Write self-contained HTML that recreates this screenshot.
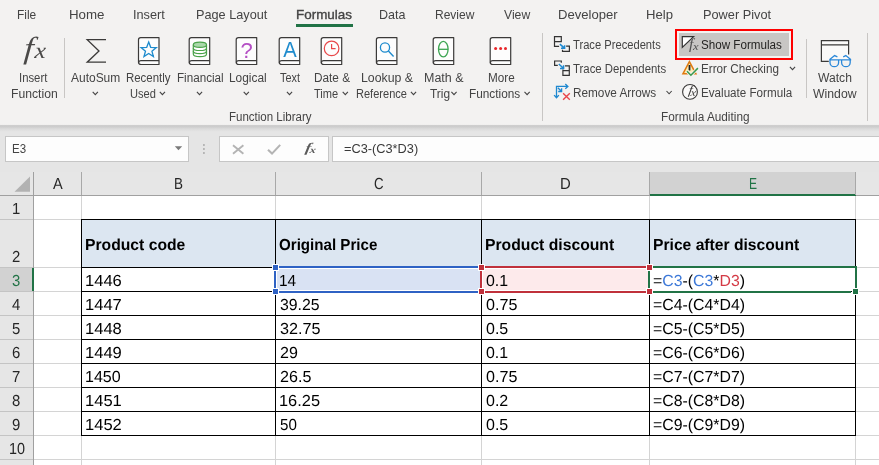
<!DOCTYPE html>
<html><head><meta charset="utf-8"><title>Excel</title>
<style>
html,body{margin:0;padding:0;}
body{width:879px;height:465px;overflow:hidden;position:relative;background:#fff;font-family:"Liberation Sans",sans-serif;}
.t{position:absolute;white-space:nowrap;line-height:0;transform-origin:0 0;display:inline-block;}
.abs{position:absolute;}
#ribbon{position:absolute;left:0;top:0;width:879px;height:124px;background:#f3f2f1;}
#rshadow{position:absolute;left:0;top:124px;width:879px;height:8px;background:linear-gradient(#f3f2f1 0,#f0efee 0.6px,#cacaca 1.6px,#cdcdcd 2.8px,#dadada 4.8px,#e5e5e5 7.8px);}
#fbar{position:absolute;left:0;top:132px;width:879px;height:40px;background:#e5e5e5;}
.box{position:absolute;background:#fdfdfd;border:1px solid #c6c6c6;box-sizing:border-box;}
.vsep{position:absolute;width:1px;background:#c8c6c4;}
#sheet{position:absolute;left:0;top:172px;width:879px;height:293px;background:#fff;}
.hl{position:absolute;height:1px;background:#d4d4d4;}
.vl{position:absolute;width:1px;background:#d4d4d4;}
.bl{position:absolute;background:#000;}
#rt{position:absolute;left:0;top:0;width:879px;height:172px;will-change:transform;}
#st{position:absolute;left:0;top:0;width:879px;height:465px;}

</style></head>
<body>
<div id="ribbon"></div><div id="rshadow"></div><div id="fbar"></div>
<div class="abs" style="left:296px;top:24px;width:57px;height:3px;background:#217346"></div>
<div class="vsep" style="left:64px;top:38px;height:60px"></div>
<div class="vsep" style="left:542px;top:33px;height:88px"></div>
<div class="vsep" style="left:806px;top:39px;height:59px"></div>
<div class="vsep" style="left:867px;top:33px;height:88px"></div>
<div class="abs" style="left:679px;top:33px;width:110px;height:23px;background:#c8c6c4"></div>
<div class="abs" style="left:675px;top:29px;width:118px;height:31px;box-sizing:border-box;border:2px solid #fe0000"></div>
<div class="box" style="left:5px;top:136px;width:184px;height:26px"></div>
<div class="box" style="left:219px;top:136px;width:110px;height:26px"></div>
<div class="box" style="left:332px;top:136px;width:560px;height:26px"></div>
<div id="sheet"></div>
<div class="abs" style="left:0;top:172px;width:879px;height:23px;background:#e6e6e6"></div>
<div class="abs" style="left:0;top:195px;width:33px;height:270px;background:#e6e6e6"></div>
<div class="abs" style="left:650px;top:172px;width:206px;height:22px;background:#d2d2d2"></div>
<div class="abs" style="left:650px;top:194px;width:206px;height:2px;background:#217346"></div>
<div class="abs" style="left:0;top:268px;width:33px;height:23px;background:#d2d2d2"></div>
<div class="abs" style="left:32px;top:267px;width:2px;height:25px;background:#217346"></div>
<div class="vl" style="left:81px;top:196px;height:269px"></div>
<div class="vl" style="left:275px;top:196px;height:269px"></div>
<div class="vl" style="left:481px;top:196px;height:269px"></div>
<div class="vl" style="left:649px;top:196px;height:269px"></div>
<div class="vl" style="left:855px;top:196px;height:269px"></div>
<div class="hl" style="left:34px;top:219px;width:845px"></div>
<div class="hl" style="left:34px;top:267px;width:845px"></div>
<div class="hl" style="left:34px;top:291px;width:845px"></div>
<div class="hl" style="left:34px;top:315px;width:845px"></div>
<div class="hl" style="left:34px;top:339px;width:845px"></div>
<div class="hl" style="left:34px;top:363px;width:845px"></div>
<div class="hl" style="left:34px;top:387px;width:845px"></div>
<div class="hl" style="left:34px;top:411px;width:845px"></div>
<div class="hl" style="left:34px;top:435px;width:845px"></div>
<div class="hl" style="left:34px;top:459px;width:845px"></div>
<div class="abs" style="left:0;top:195px;width:650px;height:1px;background:#a0a0a0"></div>
<div class="abs" style="left:856px;top:195px;width:23px;height:1px;background:#a0a0a0"></div>
<div class="abs" style="left:33px;top:172px;width:1px;height:96px;background:#a0a0a0"></div>
<div class="abs" style="left:33px;top:291px;width:1px;height:174px;background:#a0a0a0"></div>
<div class="abs" style="left:81px;top:172px;width:1px;height:23px;background:#a8a8a8"></div>
<div class="abs" style="left:275px;top:172px;width:1px;height:23px;background:#a8a8a8"></div>
<div class="abs" style="left:481px;top:172px;width:1px;height:23px;background:#a8a8a8"></div>
<div class="abs" style="left:649px;top:172px;width:1px;height:23px;background:#a8a8a8"></div>
<div class="abs" style="left:855px;top:172px;width:1px;height:23px;background:#a8a8a8"></div>
<div class="abs" style="left:0;top:219px;width:33px;height:1px;background:#c4c4c4"></div>
<div class="abs" style="left:0;top:267px;width:33px;height:1px;background:#c4c4c4"></div>
<div class="abs" style="left:0;top:291px;width:33px;height:1px;background:#c4c4c4"></div>
<div class="abs" style="left:0;top:315px;width:33px;height:1px;background:#c4c4c4"></div>
<div class="abs" style="left:0;top:339px;width:33px;height:1px;background:#c4c4c4"></div>
<div class="abs" style="left:0;top:363px;width:33px;height:1px;background:#c4c4c4"></div>
<div class="abs" style="left:0;top:387px;width:33px;height:1px;background:#c4c4c4"></div>
<div class="abs" style="left:0;top:411px;width:33px;height:1px;background:#c4c4c4"></div>
<div class="abs" style="left:0;top:435px;width:33px;height:1px;background:#c4c4c4"></div>
<div class="abs" style="left:0;top:459px;width:33px;height:1px;background:#c4c4c4"></div>
<div class="abs" style="left:82px;top:220px;width:773px;height:47px;background:#dce6f1"></div>
<div class="bl" style="left:81px;top:219px;width:1px;height:217px"></div>
<div class="bl" style="left:275px;top:219px;width:1px;height:217px"></div>
<div class="bl" style="left:481px;top:219px;width:1px;height:217px"></div>
<div class="bl" style="left:649px;top:219px;width:1px;height:217px"></div>
<div class="bl" style="left:855px;top:219px;width:1px;height:217px"></div>
<div class="bl" style="left:81px;top:219px;width:775px;height:1px"></div>
<div class="bl" style="left:81px;top:267px;width:775px;height:1px"></div>
<div class="bl" style="left:81px;top:291px;width:775px;height:1px"></div>
<div class="bl" style="left:81px;top:315px;width:775px;height:1px"></div>
<div class="bl" style="left:81px;top:339px;width:775px;height:1px"></div>
<div class="bl" style="left:81px;top:363px;width:775px;height:1px"></div>
<div class="bl" style="left:81px;top:387px;width:775px;height:1px"></div>
<div class="bl" style="left:81px;top:411px;width:775px;height:1px"></div>
<div class="bl" style="left:81px;top:435px;width:775px;height:1px"></div>
<svg class="abs" style="left:0;top:0;will-change:transform" width="879" height="465" viewBox="0 0 879 465" fill="none">
<text transform="translate(23.5,58.2) scale(1.12,1) skewX(-4)" font-family="Liberation Serif, serif" font-style="italic" fill="#4a4948"><tspan font-size="30.4">f</tspan><tspan x="9.6" y="0" font-size="22.6">x</tspan></text>
<path d="M106,39.7 H87.2 L99,51 L87.2,62.2 H106" stroke="#3b3a39" stroke-width="1.3" stroke-linejoin="miter"/>
<path d="M138.5,39.800000000000004 Q138.5,37.6 140.7,37.6 H159.0 V64.5 H141.1 Q138.5,64.5 138.5,62.3 Z" fill="#fdfdfd" stroke="#3b3a39" stroke-width="1.2" stroke-linejoin="round"/>
<path d="M159.0,60.7 H141.1 Q138.7,60.7 138.7,62.7" stroke="#3b3a39" stroke-width="1.2"/>
<path d="M189.2,39.800000000000004 Q189.2,37.6 191.39999999999998,37.6 H209.7 V64.5 H191.79999999999998 Q189.2,64.5 189.2,62.3 Z" fill="#fdfdfd" stroke="#3b3a39" stroke-width="1.2" stroke-linejoin="round"/>
<path d="M209.7,60.7 H191.79999999999998 Q189.39999999999998,60.7 189.39999999999998,62.7" stroke="#3b3a39" stroke-width="1.2"/>
<path d="M236.2,39.800000000000004 Q236.2,37.6 238.39999999999998,37.6 H256.7 V64.5 H238.79999999999998 Q236.2,64.5 236.2,62.3 Z" fill="#fdfdfd" stroke="#3b3a39" stroke-width="1.2" stroke-linejoin="round"/>
<path d="M256.7,60.7 H238.79999999999998 Q236.39999999999998,60.7 236.39999999999998,62.7" stroke="#3b3a39" stroke-width="1.2"/>
<path d="M279.2,39.800000000000004 Q279.2,37.6 281.4,37.6 H299.7 V64.5 H281.8 Q279.2,64.5 279.2,62.3 Z" fill="#fdfdfd" stroke="#3b3a39" stroke-width="1.2" stroke-linejoin="round"/>
<path d="M299.7,60.7 H281.8 Q279.4,60.7 279.4,62.7" stroke="#3b3a39" stroke-width="1.2"/>
<path d="M321.2,39.800000000000004 Q321.2,37.6 323.4,37.6 H341.7 V64.5 H323.8 Q321.2,64.5 321.2,62.3 Z" fill="#fdfdfd" stroke="#3b3a39" stroke-width="1.2" stroke-linejoin="round"/>
<path d="M341.7,60.7 H323.8 Q321.4,60.7 321.4,62.7" stroke="#3b3a39" stroke-width="1.2"/>
<path d="M376.4,39.800000000000004 Q376.4,37.6 378.59999999999997,37.6 H396.9 V64.5 H379.0 Q376.4,64.5 376.4,62.3 Z" fill="#fdfdfd" stroke="#3b3a39" stroke-width="1.2" stroke-linejoin="round"/>
<path d="M396.9,60.7 H379.0 Q376.59999999999997,60.7 376.59999999999997,62.7" stroke="#3b3a39" stroke-width="1.2"/>
<path d="M433.2,39.800000000000004 Q433.2,37.6 435.4,37.6 H453.7 V64.5 H435.8 Q433.2,64.5 433.2,62.3 Z" fill="#fdfdfd" stroke="#3b3a39" stroke-width="1.2" stroke-linejoin="round"/>
<path d="M453.7,60.7 H435.8 Q433.4,60.7 433.4,62.7" stroke="#3b3a39" stroke-width="1.2"/>
<path d="M490.2,39.800000000000004 Q490.2,37.6 492.4,37.6 H510.7 V64.5 H492.8 Q490.2,64.5 490.2,62.3 Z" fill="#fdfdfd" stroke="#3b3a39" stroke-width="1.2" stroke-linejoin="round"/>
<path d="M510.7,60.7 H492.8 Q490.4,60.7 490.4,62.7" stroke="#3b3a39" stroke-width="1.2"/>
<polygon points="148.70,42.10 150.70,47.35 156.31,47.63 151.93,51.15 153.40,56.57 148.70,53.50 144.00,56.57 145.47,51.15 141.09,47.63 146.70,47.35" stroke="#1e8bcd" stroke-width="1.3" stroke-linejoin="miter"/>
<path d="M193.3,44.8 V54 A6.6,2.6 0 0 0 206.5,54 V44.8" fill="#fff" stroke="#4aa24a" stroke-width="1.2"/>
<ellipse cx="199.9" cy="44.8" rx="6.6" ry="2.6" fill="#a9d8a9" stroke="#4aa24a" stroke-width="1.2"/>
<path d="M193.3,47.9 A6.6,2.6 0 0 0 206.5,47.9" stroke="#4aa24a" stroke-width="1.2"/>
<path d="M193.3,51 A6.6,2.6 0 0 0 206.5,51" stroke="#4aa24a" stroke-width="1.2"/>
<text x="246.6" y="57.8" text-anchor="middle" font-family="Liberation Sans, sans-serif" font-size="22" fill="#b44fc4">?</text>
<text x="289.9" y="56.8" text-anchor="middle" font-family="Liberation Sans, sans-serif" font-size="22" fill="#1e8bcd" textLength="13.5" lengthAdjust="spacingAndGlyphs">A</text>
<circle cx="331.6" cy="48.4" r="7.3" stroke="#e8484a" stroke-width="1.2"/>
<path d="M331.6,44 V48.6 H335.6" stroke="#e8484a" stroke-width="1.2"/>
<circle cx="385" cy="47.5" r="4.6" stroke="#1e8bcd" stroke-width="1.3"/>
<path d="M388.4,51 L393.6,56.6" stroke="#1e8bcd" stroke-width="1.4"/>
<ellipse cx="443.3" cy="49.1" rx="4.8" ry="7.8" stroke="#3da552" stroke-width="1.3"/>
<path d="M438.5,49.3 H448.1" stroke="#3da552" stroke-width="1.3"/>
<circle cx="495.6" cy="48.6" r="1.5" fill="#e8262a"/>
<circle cx="500.6" cy="48.6" r="1.5" fill="#e8262a"/>
<circle cx="505.5" cy="48.6" r="1.5" fill="#e8262a"/>
<path d="M92.7,91.89999999999999 L95.3,94.7 L97.89999999999999,91.89999999999999" stroke="#444" stroke-width="1.1"/>
<path d="M196.9,91.89999999999999 L199.5,94.7 L202.1,91.89999999999999" stroke="#444" stroke-width="1.1"/>
<path d="M243.70000000000002,91.89999999999999 L246.3,94.7 L248.9,91.89999999999999" stroke="#444" stroke-width="1.1"/>
<path d="M286.9,91.89999999999999 L289.5,94.7 L292.1,91.89999999999999" stroke="#444" stroke-width="1.1"/>
<path d="M159.8,91.89999999999999 L162.4,94.7 L165.0,91.89999999999999" stroke="#444" stroke-width="1.1"/>
<path d="M342.7,91.89999999999999 L345.3,94.7 L347.90000000000003,91.89999999999999" stroke="#444" stroke-width="1.1"/>
<path d="M410.9,91.89999999999999 L413.5,94.7 L416.1,91.89999999999999" stroke="#444" stroke-width="1.1"/>
<path d="M451.4,91.89999999999999 L454,94.7 L456.6,91.89999999999999" stroke="#444" stroke-width="1.1"/>
<path d="M524.5,91.89999999999999 L527.1,94.7 L529.7,91.89999999999999" stroke="#444" stroke-width="1.1"/>
<path d="M666.5,91.0 L669.1,93.80000000000001 L671.7,91.0" stroke="#444" stroke-width="1.1"/>
<path d="M789.9,66.89999999999999 L792.5,69.7 L795.1,66.89999999999999" stroke="#444" stroke-width="1.1"/>
<path d="M559.1,46.4 H554.5 V36.7 H561.3 V42.3 M554.5,41.55 H561.3" stroke="#333" stroke-width="1.2"/>
<path d="M566.1,46.2 H569.4 V51.3 H562.5 V49.8" stroke="#333" stroke-width="1.2"/>
<path d="M559.9,44.1 L564.4,48.1 M564.6,45.2 V48.3 H561" stroke="#1e88d0" stroke-width="1.5"/>
<path d="M557.8,65.3 H554.6 V61 H561.3 V62.8" stroke="#333" stroke-width="1.2"/>
<path d="M565,65.9 H569.3 V75.3 H562.9 V69.6 M562.9,70.7 H569.3" stroke="#333" stroke-width="1.2"/>
<path d="M558.8,64 L563.4,68.2 M563.6,65.2 V68.4 H560" stroke="#1e88d0" stroke-width="1.5"/>
<path d="M556.5,97.6 V86.45 H567.8 M565.3,84.1 L567.9,86.45 L565.3,88.8 M554.1,95.1 L556.5,97.7 L558.9,95.1" stroke="#1e88d0" stroke-width="1.3"/>
<path d="M557.8,87.8 L561.4,91.3 M561.6,88.2 V91.5 H558.2" stroke="#1e88d0" stroke-width="1.3"/>
<path d="M563.1,93.3 L569.8,99.8 M569.8,93.3 L563.1,99.8" stroke="#e8454a" stroke-width="1.4"/>
<path d="M682.3,47.4 V36.6 H693.6 Z" fill="#fff" stroke="#333" stroke-width="1.2" stroke-linejoin="miter"/>
<text transform="translate(688.9,48.6) scale(1.1,1)" font-family="Liberation Serif, serif" font-style="italic" fill="#505050"><tspan font-size="14.3">f</tspan><tspan x="3.64" y="0.90" font-size="11.4">x</tspan></text>
<path d="M682.9,73.8 L689.4,61.6 L695.9,73.8 Z" fill="#fdecb4" stroke="#e07a10" stroke-width="1.5" stroke-linejoin="miter"/>
<path d="M689.5,65 V70.5" stroke="#222" stroke-width="1.8"/>
<path d="M687,71.2 L690.9,75.2 L697.9,68.1" stroke="#f3f2f1" stroke-width="3.2"/>
<path d="M687,71.2 L690.9,75.2 L697.9,68.1" stroke="#3a9a4e" stroke-width="1.5"/>
<circle cx="690" cy="91.9" r="7.4" fill="#faf9f8" stroke="#3b3a39" stroke-width="1.1"/>
<text transform="translate(687.9,93.8) scale(1.15,1) skewX(-8)" font-family="Liberation Serif, serif" font-style="italic" fill="#3b3a39"><tspan font-size="12.6">f</tspan><tspan x="2.3" y="1.7" font-size="10.2">x</tspan></text>
<path d="M821.4,40.6 H848.6 V61.4 H821.4 Z" fill="#faf9f8"/>
<path d="M828.8,61.4 H821.4 V40.6 H848.6 V54.4 M821.4,44.8 H848.6" stroke="#3b3a39" stroke-width="1.2"/>
<path d="M829.2,59.9 H851.2 M830,59.9 V62.4 A4.3,4.3 0 0 0 838.6,62.4 V59.9 M841.6,59.9 V62.4 A4.3,4.3 0 0 0 850.2,62.4 V59.9 M829.4,59.8 L834.6,55.6 L837.4,56.8 M851,59.8 L845.8,55.6 L843.2,56.8" stroke="#2b88d8" stroke-width="1.3"/>
<path d="M174.8,146.3 H182.2 L178.5,150.3 Z" fill="#7a7a7a"/>
<rect x="203" y="144.1" width="1.8" height="1.8" fill="#b0b0b0"/>
<rect x="203" y="148.1" width="1.8" height="1.8" fill="#b0b0b0"/>
<rect x="203" y="152.1" width="1.8" height="1.8" fill="#b0b0b0"/>
<path d="M233,145.3 L243.4,153.8 M243.4,145.3 L233,153.8" stroke="#b4b4b4" stroke-width="1.9"/>
<path d="M268,149.8 L272,153.6 L280.2,144.9" stroke="#b4b4b4" stroke-width="2.1"/>
<text transform="translate(304.8,152) scale(1.3,1) skewX(-8)" font-family="Liberation Serif, serif" font-style="italic" font-weight="bold" fill="#5a5a5a"><tspan font-size="13.2">f</tspan><tspan x="3.5" y="0.8" font-size="9.4">x</tspan></text>
<path d="M30,176.4 V191.7 H14.5 Z" fill="#b2b2b2"/>
<rect x="276" y="268" width="205" height="23" fill="#fff"/>
<rect x="277" y="269" width="203" height="21" fill="#d9e2f3"/>
<rect x="275" y="267" width="207" height="25" stroke="#2f62c4" stroke-width="2" shape-rendering="crispEdges"/>
<rect x="482" y="268" width="167" height="23" fill="#fff"/>
<rect x="483" y="269" width="165" height="21" fill="#fdeaeb"/>
<rect x="481" y="267" width="169" height="25" stroke="#c0313b" stroke-width="2" shape-rendering="crispEdges"/>
<rect x="650" y="268" width="205" height="23" fill="#fff"/>
<path d="M649,267 H856 V288 M851,292 H649 V267" stroke="#217346" stroke-width="2" shape-rendering="crispEdges"/>
<rect x="272" y="264" width="7" height="7" fill="#fff"/>
<rect x="273" y="265" width="5" height="5" fill="#2f62c4"/>
<rect x="272" y="288" width="7" height="7" fill="#fff"/>
<rect x="273" y="289" width="5" height="5" fill="#2f62c4"/>
<rect x="478" y="264" width="7" height="7" fill="#fff"/>
<rect x="479" y="265" width="5" height="5" fill="#c0313b"/>
<rect x="478" y="288" width="7" height="7" fill="#fff"/>
<rect x="479" y="289" width="5" height="5" fill="#c0313b"/>
<rect x="646" y="264" width="7" height="7" fill="#fff"/>
<rect x="647" y="265" width="5" height="5" fill="#c0313b"/>
<rect x="646" y="288" width="7" height="7" fill="#fff"/>
<rect x="647" y="289" width="5" height="5" fill="#c0313b"/>
<rect x="852" y="288" width="7" height="7" fill="#fff"/><rect x="853" y="289" width="5" height="5" fill="#217346"/>
</svg>
<div id="texts">
<div id="rt">
<span class="t" style="left:17.08px;top:14.50px;font:normal 400 13px/0 'Liberation Sans', sans-serif;color:#444;transform:scale(0.9180,1.0);transform-origin:0 4.50px;">File</span>
<span class="t" style="left:68.63px;top:14.50px;font:normal 400 13px/0 'Liberation Sans', sans-serif;color:#444;transform:scale(1.0240,1.0);transform-origin:0 4.50px;">Home</span>
<span class="t" style="left:133.22px;top:14.50px;font:normal 400 13px/0 'Liberation Sans', sans-serif;color:#444;transform:scale(0.9780,1.0);transform-origin:0 4.50px;">Insert</span>
<span class="t" style="left:195.82px;top:14.50px;font:normal 400 13px/0 'Liberation Sans', sans-serif;color:#444;transform:scale(0.9766,1.0);transform-origin:0 4.50px;">Page Layout</span>
<span class="t" style="left:378.69px;top:14.50px;font:normal 400 13px/0 'Liberation Sans', sans-serif;color:#444;transform:scale(0.9640,1.0);transform-origin:0 4.50px;">Data</span>
<span class="t" style="left:434.98px;top:14.50px;font:normal 400 13px/0 'Liberation Sans', sans-serif;color:#444;transform:scale(0.9234,1.0);transform-origin:0 4.50px;">Review</span>
<span class="t" style="left:503.65px;top:14.50px;font:normal 400 13px/0 'Liberation Sans', sans-serif;color:#444;transform:scale(0.9368,1.0);transform-origin:0 4.50px;">View</span>
<span class="t" style="left:557.64px;top:14.50px;font:normal 400 13px/0 'Liberation Sans', sans-serif;color:#444;transform:scale(1.0055,1.0);transform-origin:0 4.50px;">Developer</span>
<span class="t" style="left:646.14px;top:14.50px;font:normal 400 13px/0 'Liberation Sans', sans-serif;color:#444;transform:scale(1.0096,1.0);transform-origin:0 4.50px;">Help</span>
<span class="t" style="left:702.67px;top:14.50px;font:normal 400 13px/0 'Liberation Sans', sans-serif;color:#444;transform:scale(0.9818,1.0);transform-origin:0 4.50px;">Power Pivot</span>
<span class="t" style="left:295.57px;top:14.50px;font:normal 400 13px/0 'Liberation Sans', sans-serif;color:#444;transform:scale(1.0321,1.0);transform-origin:0 4.50px;"><span style="-webkit-text-stroke:0.35px #444">Formulas</span></span>
<span class="t" style="left:18.56px;top:77.84px;font:normal 400 12px/0 'Liberation Sans', sans-serif;color:#444;transform:scale(0.9435,1.0);transform-origin:0 4.16px;">Insert</span>
<span class="t" style="left:10.5px;top:93.84px;font:normal 400 12px/0 'Liberation Sans', sans-serif;color:#444;transform:scale(1.0143,1.0);transform-origin:0 4.16px;">Function</span>
<span class="t" style="left:71.0px;top:77.84px;font:normal 400 12px/0 'Liberation Sans', sans-serif;color:#444;transform:scale(0.9977,1.0);transform-origin:0 4.16px;">AutoSum</span>
<span class="t" style="left:126.25px;top:77.84px;font:normal 400 12px/0 'Liberation Sans', sans-serif;color:#444;transform:scale(0.9531,1.0);transform-origin:0 4.16px;">Recently</span>
<span class="t" style="left:130.25px;top:93.84px;font:normal 400 12px/0 'Liberation Sans', sans-serif;color:#444;transform:scale(0.9236,1.0);transform-origin:0 4.16px;">Used</span>
<span class="t" style="left:176.5px;top:77.84px;font:normal 400 12px/0 'Liberation Sans', sans-serif;color:#444;transform:scale(0.9713,1.0);transform-origin:0 4.16px;">Financial</span>
<span class="t" style="left:228.75px;top:77.84px;font:normal 400 12px/0 'Liberation Sans', sans-serif;color:#444;transform:scale(0.9903,1.0);transform-origin:0 4.16px;">Logical</span>
<span class="t" style="left:279.5px;top:77.84px;font:normal 400 12px/0 'Liberation Sans', sans-serif;color:#444;transform:scale(0.9041,1.0);transform-origin:0 4.16px;">Text</span>
<span class="t" style="left:313.5px;top:77.84px;font:normal 400 12px/0 'Liberation Sans', sans-serif;color:#444;transform:scale(0.9814,1.0);transform-origin:0 4.16px;">Date &amp;</span>
<span class="t" style="left:313.5px;top:93.84px;font:normal 400 12px/0 'Liberation Sans', sans-serif;color:#444;transform:scale(0.9229,1.0);transform-origin:0 4.16px;">Time</span>
<span class="t" style="left:360.5px;top:77.84px;font:normal 400 12px/0 'Liberation Sans', sans-serif;color:#444;transform:scale(1.0256,1.0);transform-origin:0 4.16px;">Lookup &amp;</span>
<span class="t" style="left:355.5px;top:93.84px;font:normal 400 12px/0 'Liberation Sans', sans-serif;color:#444;transform:scale(0.9202,1.0);transform-origin:0 4.16px;">Reference</span>
<span class="t" style="left:423.75px;top:77.84px;font:normal 400 12px/0 'Liberation Sans', sans-serif;color:#444;transform:scale(1.0392,1.0);transform-origin:0 4.16px;">Math &amp;</span>
<span class="t" style="left:429.5px;top:93.84px;font:normal 400 12px/0 'Liberation Sans', sans-serif;color:#444;transform:scale(0.9925,1.0);transform-origin:0 4.16px;">Trig</span>
<span class="t" style="left:487.5px;top:77.84px;font:normal 400 12px/0 'Liberation Sans', sans-serif;color:#444;transform:scale(0.9759,1.0);transform-origin:0 4.16px;">More</span>
<span class="t" style="left:469.25px;top:93.84px;font:normal 400 12px/0 'Liberation Sans', sans-serif;color:#444;transform:scale(0.9851,1.0);transform-origin:0 4.16px;">Functions</span>
<span class="t" style="left:229.25px;top:117.09px;font:normal 400 12px/0 'Liberation Sans', sans-serif;color:#444;transform:scale(0.9589,1.0);transform-origin:0 4.16px;">Function Library</span>
<span class="t" style="left:660.5px;top:117.09px;font:normal 400 12px/0 'Liberation Sans', sans-serif;color:#444;transform:scale(0.9829,1.0);transform-origin:0 4.16px;">Formula Auditing</span>
<span class="t" style="left:573.25px;top:44.59px;font:normal 400 12px/0 'Liberation Sans', sans-serif;color:#444;transform:scale(0.9309,1.0);transform-origin:0 4.16px;">Trace Precedents</span>
<span class="t" style="left:573.25px;top:68.84px;font:normal 400 12px/0 'Liberation Sans', sans-serif;color:#444;transform:scale(0.9478,1.0);transform-origin:0 4.16px;">Trace Dependents</span>
<span class="t" style="left:573.25px;top:93.09px;font:normal 400 12px/0 'Liberation Sans', sans-serif;color:#444;transform:scale(0.9812,1.0);transform-origin:0 4.16px;">Remove Arrows</span>
<span class="t" style="left:701.4px;top:44.59px;font:normal 400 12px/0 'Liberation Sans', sans-serif;color:#252423;transform:scale(0.9705,1.0);transform-origin:0 4.16px;">Show Formulas</span>
<span class="t" style="left:701.4px;top:68.84px;font:normal 400 12px/0 'Liberation Sans', sans-serif;color:#444;transform:scale(0.9741,1.0);transform-origin:0 4.16px;">Error Checking</span>
<span class="t" style="left:701.4px;top:93.09px;font:normal 400 12px/0 'Liberation Sans', sans-serif;color:#444;transform:scale(0.9696,1.0);transform-origin:0 4.16px;">Evaluate Formula</span>
<span class="t" style="left:818.1px;top:78.04px;font:normal 400 12px/0 'Liberation Sans', sans-serif;color:#444;transform:scale(1.0095,1.0);transform-origin:0 4.16px;">Watch</span>
<span class="t" style="left:813.4px;top:93.54px;font:normal 400 12px/0 'Liberation Sans', sans-serif;color:#444;transform:scale(1.0206,1.0);transform-origin:0 4.16px;">Window</span>
<span class="t" style="left:11.61px;top:149.40px;font:normal 400 13px/0 'Liberation Sans', sans-serif;color:#444;transform:scale(0.8861,1.0);transform-origin:0 4.50px;">E3</span>
<span class="t" style="left:344.25px;top:149.42px;font:normal 400 12.5px/0 'Liberation Sans', sans-serif;color:#3a3a3a;transform:scale(1.0217,1.0);transform-origin:0 4.33px;">=C3-(C3*D3)</span>
</div>
<div id="st">
<span class="t" style="left:52.9px;top:183.63px;font:normal 400 15.5px/0 'Liberation Sans', sans-serif;color:#262626;transform:scale(0.9364,1.03) rotate(0.03deg);transform-origin:0 5.37px;">A</span>
<span class="t" style="left:174.33px;top:183.63px;font:normal 400 15.5px/0 'Liberation Sans', sans-serif;color:#262626;transform:scale(0.8667,1.03) rotate(0.03deg);transform-origin:0 5.37px;">B</span>
<span class="t" style="left:374.4px;top:183.63px;font:normal 400 15.5px/0 'Liberation Sans', sans-serif;color:#262626;transform:scale(0.8545,1.03) rotate(0.03deg);transform-origin:0 5.37px;">C</span>
<span class="t" style="left:560.24px;top:183.63px;font:normal 400 15.5px/0 'Liberation Sans', sans-serif;color:#262626;transform:scale(0.9600,1.03) rotate(0.03deg);transform-origin:0 5.37px;">D</span>
<span class="t" style="left:749.42px;top:183.63px;font:normal 400 15.5px/0 'Liberation Sans', sans-serif;color:#217346;transform:scale(0.7778,1.03) rotate(0.03deg);transform-origin:0 5.37px;">E</span>
<span class="t" style="left:11.98px;top:208.63px;font:normal 400 15.5px/0 'Liberation Sans', sans-serif;color:#262626;transform:scale(0.9600,1.03) rotate(0.03deg);transform-origin:0 5.37px;">1</span>
<span class="t" style="left:12.46px;top:256.63px;font:normal 400 15.5px/0 'Liberation Sans', sans-serif;color:#262626;transform:scale(0.9600,1.03) rotate(0.03deg);transform-origin:0 5.37px;">2</span>
<span class="t" style="left:12.46px;top:280.63px;font:normal 400 15.5px/0 'Liberation Sans', sans-serif;color:#217346;transform:scale(0.9600,1.03) rotate(0.03deg);transform-origin:0 5.37px;">3</span>
<span class="t" style="left:11.98px;top:304.63px;font:normal 400 15.5px/0 'Liberation Sans', sans-serif;color:#262626;transform:scale(0.9600,1.03) rotate(0.03deg);transform-origin:0 5.37px;">4</span>
<span class="t" style="left:12.46px;top:328.63px;font:normal 400 15.5px/0 'Liberation Sans', sans-serif;color:#262626;transform:scale(0.9600,1.03) rotate(0.03deg);transform-origin:0 5.37px;">5</span>
<span class="t" style="left:12.46px;top:352.63px;font:normal 400 15.5px/0 'Liberation Sans', sans-serif;color:#262626;transform:scale(0.9600,1.03) rotate(0.03deg);transform-origin:0 5.37px;">6</span>
<span class="t" style="left:12.46px;top:376.63px;font:normal 400 15.5px/0 'Liberation Sans', sans-serif;color:#262626;transform:scale(0.9600,1.03) rotate(0.03deg);transform-origin:0 5.37px;">7</span>
<span class="t" style="left:12.46px;top:400.63px;font:normal 400 15.5px/0 'Liberation Sans', sans-serif;color:#262626;transform:scale(0.9600,1.03) rotate(0.03deg);transform-origin:0 5.37px;">8</span>
<span class="t" style="left:12.46px;top:424.63px;font:normal 400 15.5px/0 'Liberation Sans', sans-serif;color:#262626;transform:scale(0.9600,1.03) rotate(0.03deg);transform-origin:0 5.37px;">9</span>
<span class="t" style="left:8.54px;top:448.63px;font:normal 400 15.5px/0 'Liberation Sans', sans-serif;color:#262626;transform:scale(0.9300,1.03) rotate(0.03deg);transform-origin:0 5.37px;">10</span>
<span class="t" style="left:84.69px;top:244.63px;font:normal 700 15.5px/0 'Liberation Sans', sans-serif;color:#000;transform:scale(1.0130,1.03) rotate(0.03deg);transform-origin:0 5.37px;">Product code</span>
<span class="t" style="left:279.4px;top:244.63px;font:normal 700 15.5px/0 'Liberation Sans', sans-serif;color:#000;transform:scale(0.9756,1.03) rotate(0.03deg);transform-origin:0 5.37px;">Original Price</span>
<span class="t" style="left:484.99px;top:244.63px;font:normal 700 15.5px/0 'Liberation Sans', sans-serif;color:#000;transform:scale(1.0136,1.03) rotate(0.03deg);transform-origin:0 5.37px;">Product discount</span>
<span class="t" style="left:652.99px;top:244.63px;font:normal 700 15.5px/0 'Liberation Sans', sans-serif;color:#000;transform:scale(1.0101,1.03) rotate(0.03deg);transform-origin:0 5.37px;">Price after discount</span>
<span class="t" style="left:84.63px;top:280.63px;font:normal 400 15.5px/0 'Liberation Sans', sans-serif;color:#000;transform:scale(1.0681,1.03) rotate(0.03deg);transform-origin:0 5.37px;">1446</span>
<span class="t" style="left:279.11px;top:280.63px;font:normal 400 15.5px/0 'Liberation Sans', sans-serif;color:#000;transform:scale(0.9928,1.03) rotate(0.03deg);transform-origin:0 5.37px;">14</span>
<span class="t" style="left:485.7px;top:280.63px;font:normal 400 15.5px/0 'Liberation Sans', sans-serif;color:#000;transform:scale(1.0274,1.03) rotate(0.03deg);transform-origin:0 5.37px;">0.1</span>
<span class="t" style="left:653.0px;top:280.63px;font:normal 400 15.5px/0 'Liberation Sans', sans-serif;color:#000;transform:scale(1.0217,1.03) rotate(0.03deg);transform-origin:0 5.37px;">=<span style="color:#3c78d8">C3</span>-(<span style="color:#3c78d8">C3</span>*<span style="color:#d43a45">D3</span>)</span>
<span class="t" style="left:84.63px;top:304.63px;font:normal 400 15.5px/0 'Liberation Sans', sans-serif;color:#000;transform:scale(1.0681,1.03) rotate(0.03deg);transform-origin:0 5.37px;">1447</span>
<span class="t" style="left:280.1px;top:304.63px;font:normal 400 15.5px/0 'Liberation Sans', sans-serif;color:#000;transform:scale(1.0218,1.03) rotate(0.03deg);transform-origin:0 5.37px;">39.25</span>
<span class="t" style="left:485.7px;top:304.63px;font:normal 400 15.5px/0 'Liberation Sans', sans-serif;color:#000;transform:scale(1.0390,1.03) rotate(0.03deg);transform-origin:0 5.37px;">0.75</span>
<span class="t" style="left:653.0px;top:304.63px;font:normal 400 15.5px/0 'Liberation Sans', sans-serif;color:#000;transform:scale(1.0217,1.03) rotate(0.03deg);transform-origin:0 5.37px;">=C4-(C4*D4)</span>
<span class="t" style="left:84.63px;top:328.63px;font:normal 400 15.5px/0 'Liberation Sans', sans-serif;color:#000;transform:scale(1.0681,1.03) rotate(0.03deg);transform-origin:0 5.37px;">1448</span>
<span class="t" style="left:279.6px;top:328.63px;font:normal 400 15.5px/0 'Liberation Sans', sans-serif;color:#000;transform:scale(1.0454,1.03) rotate(0.03deg);transform-origin:0 5.37px;">32.75</span>
<span class="t" style="left:485.7px;top:328.63px;font:normal 400 15.5px/0 'Liberation Sans', sans-serif;color:#000;transform:scale(1.0322,1.03) rotate(0.03deg);transform-origin:0 5.37px;">0.5</span>
<span class="t" style="left:653.0px;top:328.63px;font:normal 400 15.5px/0 'Liberation Sans', sans-serif;color:#000;transform:scale(1.0217,1.03) rotate(0.03deg);transform-origin:0 5.37px;">=C5-(C5*D5)</span>
<span class="t" style="left:84.63px;top:352.63px;font:normal 400 15.5px/0 'Liberation Sans', sans-serif;color:#000;transform:scale(1.0681,1.03) rotate(0.03deg);transform-origin:0 5.37px;">1449</span>
<span class="t" style="left:279.6px;top:352.63px;font:normal 400 15.5px/0 'Liberation Sans', sans-serif;color:#000;transform:scale(1.0349,1.03) rotate(0.03deg);transform-origin:0 5.37px;">29</span>
<span class="t" style="left:485.7px;top:352.63px;font:normal 400 15.5px/0 'Liberation Sans', sans-serif;color:#000;transform:scale(1.0274,1.03) rotate(0.03deg);transform-origin:0 5.37px;">0.1</span>
<span class="t" style="left:653.0px;top:352.63px;font:normal 400 15.5px/0 'Liberation Sans', sans-serif;color:#000;transform:scale(1.0217,1.03) rotate(0.03deg);transform-origin:0 5.37px;">=C6-(C6*D6)</span>
<span class="t" style="left:84.66px;top:376.63px;font:normal 400 15.5px/0 'Liberation Sans', sans-serif;color:#000;transform:scale(1.0366,1.03) rotate(0.03deg);transform-origin:0 5.37px;">1450</span>
<span class="t" style="left:279.6px;top:376.63px;font:normal 400 15.5px/0 'Liberation Sans', sans-serif;color:#000;transform:scale(1.0390,1.03) rotate(0.03deg);transform-origin:0 5.37px;">26.5</span>
<span class="t" style="left:485.7px;top:376.63px;font:normal 400 15.5px/0 'Liberation Sans', sans-serif;color:#000;transform:scale(1.0390,1.03) rotate(0.03deg);transform-origin:0 5.37px;">0.75</span>
<span class="t" style="left:653.0px;top:376.63px;font:normal 400 15.5px/0 'Liberation Sans', sans-serif;color:#000;transform:scale(1.0217,1.03) rotate(0.03deg);transform-origin:0 5.37px;">=C7-(C7*D7)</span>
<span class="t" style="left:84.63px;top:400.63px;font:normal 400 15.5px/0 'Liberation Sans', sans-serif;color:#000;transform:scale(1.0681,1.03) rotate(0.03deg);transform-origin:0 5.37px;">1451</span>
<span class="t" style="left:279.14px;top:400.63px;font:normal 400 15.5px/0 'Liberation Sans', sans-serif;color:#000;transform:scale(1.0574,1.03) rotate(0.03deg);transform-origin:0 5.37px;">16.25</span>
<span class="t" style="left:485.7px;top:400.63px;font:normal 400 15.5px/0 'Liberation Sans', sans-serif;color:#000;transform:scale(1.0322,1.03) rotate(0.03deg);transform-origin:0 5.37px;">0.2</span>
<span class="t" style="left:653.0px;top:400.63px;font:normal 400 15.5px/0 'Liberation Sans', sans-serif;color:#000;transform:scale(1.0217,1.03) rotate(0.03deg);transform-origin:0 5.37px;">=C8-(C8*D8)</span>
<span class="t" style="left:84.63px;top:424.63px;font:normal 400 15.5px/0 'Liberation Sans', sans-serif;color:#000;transform:scale(1.0681,1.03) rotate(0.03deg);transform-origin:0 5.37px;">1452</span>
<span class="t" style="left:279.6px;top:424.63px;font:normal 400 15.5px/0 'Liberation Sans', sans-serif;color:#000;transform:scale(0.9761,1.03) rotate(0.03deg);transform-origin:0 5.37px;">50</span>
<span class="t" style="left:485.7px;top:424.63px;font:normal 400 15.5px/0 'Liberation Sans', sans-serif;color:#000;transform:scale(1.0322,1.03) rotate(0.03deg);transform-origin:0 5.37px;">0.5</span>
<span class="t" style="left:653.0px;top:424.63px;font:normal 400 15.5px/0 'Liberation Sans', sans-serif;color:#000;transform:scale(1.0217,1.03) rotate(0.03deg);transform-origin:0 5.37px;">=C9-(C9*D9)</span>
</div>
</div>
</body></html>
